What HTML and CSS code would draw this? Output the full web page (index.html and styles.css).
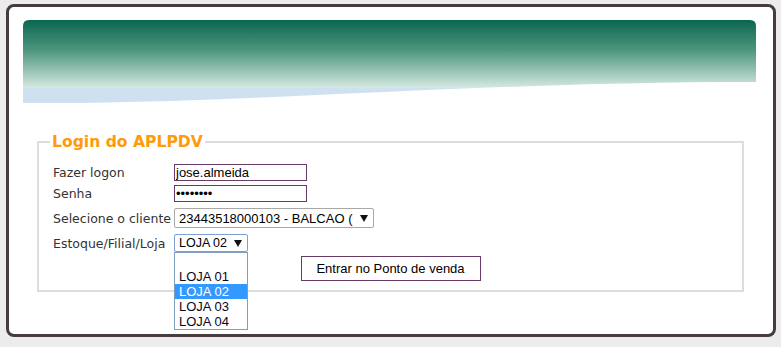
FILE: index.html
```html
<!doctype html>
<html lang="pt-BR">
<head>
  <meta charset="utf-8">
  <title>Login do APLPDV</title>
  <link rel="stylesheet" href="styles.css">
</head>
<body>

<div class="frame">
  <svg class="banner" width="733" height="83" viewBox="0 0 733 83">
    <defs>
      <linearGradient id="bannerGrad" x1="0" y1="0" x2="0" y2="1">
        <stop offset="0" stop-color="#0a6650"/>
        <stop offset="0.45" stop-color="#4f977f"/>
        <stop offset="1" stop-color="#d6e9e1"/>
      </linearGradient>
    </defs>
    <path d="M0,6 Q0,0 6,0 H727 Q733,0 733,6 V68 H0 Z" fill="url(#bannerGrad)"/>
    <rect x="0" y="68" width="733" height="15" fill="#cfe1f1"/>
    <path d="M0,83.5 C230,83.5 450,62 733,62 V84 H0 Z" fill="#ffffff"/>
  </svg>

  <form method="POST" id="login-form">
    <fieldset class="login-box">
      <legend>Login do APLPDV</legend>

      <div class="row row-user">
        <label for="usuario">Fazer logon</label>
        <input type="text" id="usuario" name="usuario" value="jose.almeida">
      </div>

      <div class="row row-pass">
        <label for="senha">Senha</label>
        <input type="password" id="senha" name="senha" value="12345678">
      </div>

      <div class="row row-client">
        <label>Selecione o cliente</label>
        <div class="select select-client">
          <span class="select-value">23443518000103 - BALCAO (CONSUMIDOR)</span>
          <span class="select-arrow"></span>
        </div>
      </div>

      <div class="row row-loja">
        <label>Estoque/Filial/Loja</label>
        <div class="select-wrap">
          <div class="select select-loja">
            <span class="select-value">LOJA 02</span>
            <span class="select-arrow"></span>
          </div>
          <ul class="dropdown">
            <li>&nbsp;</li>
            <li>LOJA 01</li>
            <li class="selected">LOJA 02</li>
            <li>LOJA 03</li>
            <li>LOJA 04</li>
          </ul>
        </div>
      </div>

      <button type="submit" class="btn-enter">Entrar no Ponto de venda</button>
    </fieldset>
  </form>
</div>

</body>
</html>
```

FILE: styles.css
```css
body {
  margin: 0;
  background: #ececec;
  font-family: "DejaVu Sans", Verdana, sans-serif;
}

.frame {
  margin: 4px 0 0 6px;
  width: 770px;
  height: 333px;
  box-sizing: border-box;
  border: 3px solid #463c3c;
  border-radius: 8px;
  background: #ffffff;
  padding: 13px 17px 0 14px;
}

.banner {
  display: block;
}

.login-box {
  width: 707px;
  box-sizing: border-box;
  margin: 29px 0 0 14px;
  padding: 12px 14px 9px 14px;
  border: 2px solid #dddddd;
}

.login-box legend {
  margin-left: -3px;
  padding: 0 2px;
  font-size: 15.6px;
  line-height: 20px;
  font-weight: bold;
  color: #ff9a0a;
}

.row {
  display: flex;
  align-items: center;
}

.row label {
  flex: 0 0 121px;
  min-width: 0;
  white-space: nowrap;
  font-size: 12.5px;
  color: #333333;
}

.row-user { margin-bottom: 4px; }
.row-pass { margin-bottom: 6px; }
.row-client { margin-bottom: 6px; }

input[type="text"], input[type="password"] {
  width: 133px;
  height: 17px;
  box-sizing: border-box;
  margin: 0;
  padding: 0 2px 0 1px;
  border: 1px solid #6a3a6a;
  font-family: "Liberation Sans", Arial, sans-serif;
  font-size: 13px;
  color: #000;
  outline: none;
}

.select {
  display: flex;
  align-items: center;
  box-sizing: border-box;
  padding: 0 5px 0 4px;
  border: 1px solid #a8a8a8;
  border-radius: 2px;
  background: #ffffff;
  font-family: "Liberation Sans", Arial, sans-serif;
  font-size: 13px;
  color: #000;
}

.select-value {
  flex: 1;
  overflow: hidden;
  white-space: nowrap;
}

.select-arrow {
  width: 0;
  height: 0;
  margin-left: 7px;
  border-left: 4px solid transparent;
  border-right: 4px solid transparent;
  border-top: 7px solid #111111;
}

.select-client {
  width: 200px;
  height: 20px;
}

.select-wrap {
  position: relative;
}

.select-loja {
  width: 74px;
  height: 18px;
  border-color: #7ba0cf;
}

.select-loja .select-value {
  overflow: visible;
  font-size: 12.5px;
}

.select-loja .select-arrow {
  margin-left: 3px;
}

.dropdown {
  position: absolute;
  top: 100%;
  left: 0;
  width: 74px;
  box-sizing: border-box;
  margin: 0;
  padding: 0;
  list-style: none;
  border: 1px solid #7f9dbd;
  background: #ffffff;
  font-family: "Liberation Sans", Arial, sans-serif;
  font-size: 13px;
  color: #0a0620;
}

.dropdown li {
  height: 15px;
  line-height: 15px;
  padding-left: 4px;
}

.dropdown li:first-child {
  height: 16px;
}

.dropdown li.selected {
  background: #3399ff;
  color: #ffffff;
}

.btn-enter {
  display: block;
  width: 180px;
  height: 25px;
  margin: 4px auto 0;
  padding: 0;
  border: 1px solid #6a3a6a;
  background: #ffffff;
  font-family: "Liberation Sans", Arial, sans-serif;
  font-size: 13px;
  color: #000;
  cursor: pointer;
}
```
